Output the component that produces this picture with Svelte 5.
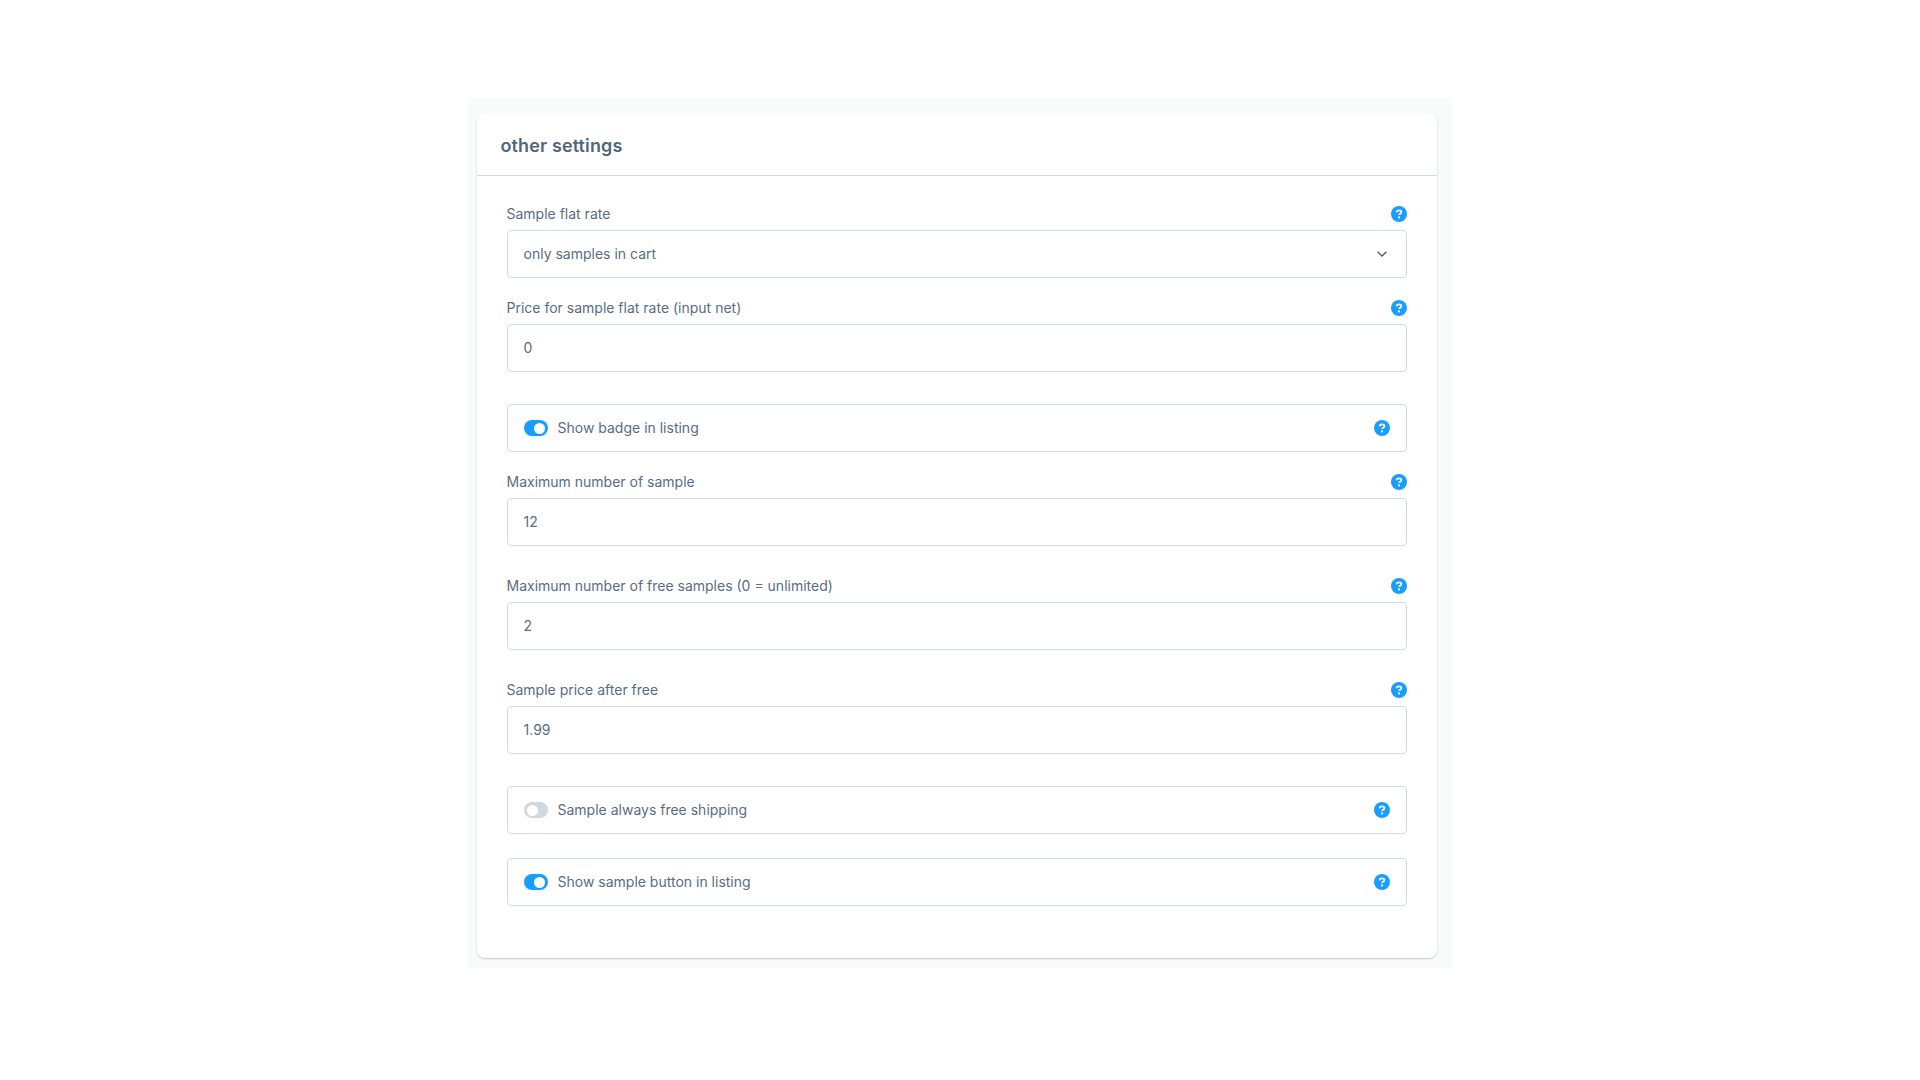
<script>
  const fields = [
    { type: 'select', label: 'Sample flat rate', value: 'only samples in cart' },
    { type: 'input', label: 'Price for sample flat rate (input net)', value: '0' },
    { type: 'switch', label: 'Show badge in listing', on: true },
    { type: 'input', label: 'Maximum number of sample', value: '12' },
    { type: 'input', label: 'Maximum number of free samples (0 = unlimited)', value: '2' },
    { type: 'input', label: 'Sample price after free', value: '1.99' },
    { type: 'switch', label: 'Sample always free shipping', on: false },
    { type: 'switch', label: 'Show sample button in listing', on: true }
  ];
</script>

{#snippet help()}
  <svg class="help" viewBox="0 0 16 16" aria-hidden="true">
    <circle cx="8" cy="8" r="8" fill="#189eff" />
    <path d="M5.6 6.3c0-1.2 1-1.9 2.4-1.9s2.4.7 2.4 1.8c0 1.5-2.4 1.4-2.4 2.9" fill="none" stroke="#fff" stroke-width="1.7" />
    <circle cx="8" cy="11.4" r="1.05" fill="#fff" />
  </svg>
{/snippet}

<div class="page">
  <div class="backdrop">
    <section class="card">
      <header class="card-header">other settings</header>
      <div class="card-body">
        {#each fields as field}
          {#if field.type === 'switch'}
            <div class="switch-field">
              <span class="switch" class:on={field.on}><span class="knob"></span></span>
              <span class="switch-label">{field.label}</span>
              {@render help()}
            </div>
          {:else}
            <div class="field {field.type}">
              <div class="label-row">
                <span>{field.label}</span>
                {@render help()}
              </div>
              <div class="box">
                <span>{field.value}</span>
                {#if field.type === 'select'}
                  <svg class="chevron" viewBox="0 0 10 6" aria-hidden="true">
                    <path d="M.6.8L5 5l4.4-4.2" fill="none" stroke="#52667a" stroke-width="1.5" />
                  </svg>
                {/if}
              </div>
            </div>
          {/if}
        {/each}
      </div>
    </section>
  </div>
</div>

<style>
  :global(body) {
    margin: 0;
    background: #fff;
    font-family: Inter, "Liberation Sans", sans-serif;
    color: #52667a;
  }

  .page {
    display: flex;
    justify-content: center;
    padding-top: 98px;
  }

  .backdrop {
    width: 984px;
    box-sizing: border-box;
    padding: 15px 15px 10px 9px;
    background: #f9fafb;
  }

  .card {
    background: #fff;
    border-radius: 8px;
    box-shadow: 0 1px 2px rgba(0, 0, 0, 0.2);
  }

  .card-header {
    height: 63px;
    box-sizing: border-box;
    padding: 21px 24px 0 23.5px;
    font-size: 18px;
    line-height: 24px;
    font-weight: 600;
    letter-spacing: 0.12px;
    border-bottom: 1px solid #d1d9e0;
  }

  .card-body {
    display: flex;
    flex-direction: column;
    padding: 27px 30px 33px 29.5px;
    font-size: 14px;
    line-height: 22px;
    color: #5a6d81;
  }

  .label-row {
    display: flex;
    justify-content: space-between;
    align-items: center;
    height: 22px;
    margin-bottom: 5px;
  }

  .field.select {
    margin-bottom: 19px;
  }

  .field.input {
    margin-bottom: 29px;
  }

  .box,
  .switch-field {
    display: flex;
    align-items: center;
    height: 48px;
    box-sizing: border-box;
    padding: 0 16px;
    border: 1px solid #d1d9e0;
    border-radius: 4px;
    background: #fff;
  }

  .box {
    justify-content: space-between;
  }

  .chevron {
    width: 10px;
    height: 6px;
    margin-right: 3px;
  }

  .help {
    width: 16px;
    height: 16px;
    flex: none;
  }

  .switch-field {
    margin-top: 3px;
    margin-bottom: 19px;
  }

  .switch-field + .switch-field {
    margin-top: 5px;
  }

  .switch {
    display: flex;
    align-items: center;
    width: 24px;
    height: 16px;
    border-radius: 8px;
    background: #d1d9e0;
    padding: 0 3px;
    box-sizing: border-box;
    margin-right: 10px;
  }

  .switch.on {
    background: #189eff;
    justify-content: flex-end;
  }

  .knob {
    width: 11px;
    height: 11px;
    border-radius: 50%;
    background: #fff;
  }

  .switch-label {
    flex: 1;
  }
</style>
